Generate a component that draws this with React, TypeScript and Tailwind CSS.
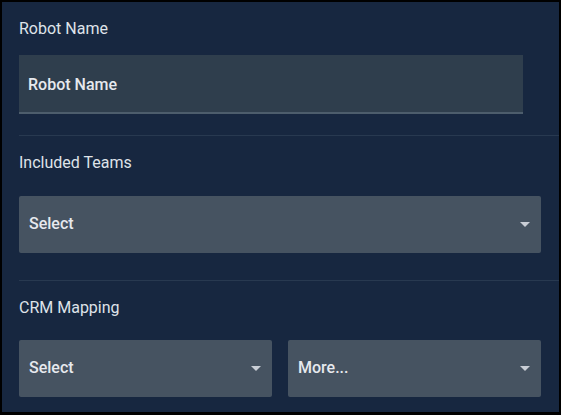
import React from "react";

const Caret = () => (
  <svg width="10" height="5" viewBox="0 0 10 5" className="shrink-0">
    <path d="M0 0 L10 0 L5 5 Z" fill="#c9ced6" />
  </svg>
);

const SelectBox = ({ label, className = "" }: { label: string; className?: string }) => (
  <div
    className={`flex h-[57px] items-center justify-between rounded-[2px] bg-[#465361] pb-[1px] pl-[10px] pr-[11px] ${className}`}
  >
    <span className="text-[16px] font-medium text-[#e6e9ee]">{label}</span>
    <Caret />
  </div>
);

export default function App() {
  return (
    <div
      className="h-[415px] w-[561px] border-2 border-b-[3px] border-black bg-[#172740]"
      style={{ fontFamily: "Roboto, 'Liberation Sans', sans-serif" }}
    >
      <div className="flex flex-col pl-[17px] pt-[17px]">
        <label className="text-[16px] leading-[19px] text-[#dfe3e9]">Robot Name</label>
        <div className="mt-[17px] flex h-[59px] w-[504px] items-center border-b-2 border-[#4d5d6c] bg-[#2f3e4d] pl-[9px] pt-[3px]">
          <span className="text-[16px] font-medium text-[#e6e9ee]">Robot Name</span>
        </div>
        <div className="mt-[21px] h-px bg-[#283950]" />

        <label className="mt-[17px] text-[16px] leading-[19px] text-[#dfe3e9]">Included Teams</label>
        <SelectBox label="Select" className="mt-[24px] w-[522px]" />
        <div className="mt-[27px] h-px bg-[#283950]" />

        <label className="mt-[17px] text-[16px] leading-[19px] text-[#dfe3e9]">CRM Mapping</label>
        <div className="mt-[23px] flex w-[522px] gap-[16px]">
          <SelectBox label="Select" className="flex-1" />
          <SelectBox label="More..." className="flex-1" />
        </div>
      </div>
    </div>
  );
}
